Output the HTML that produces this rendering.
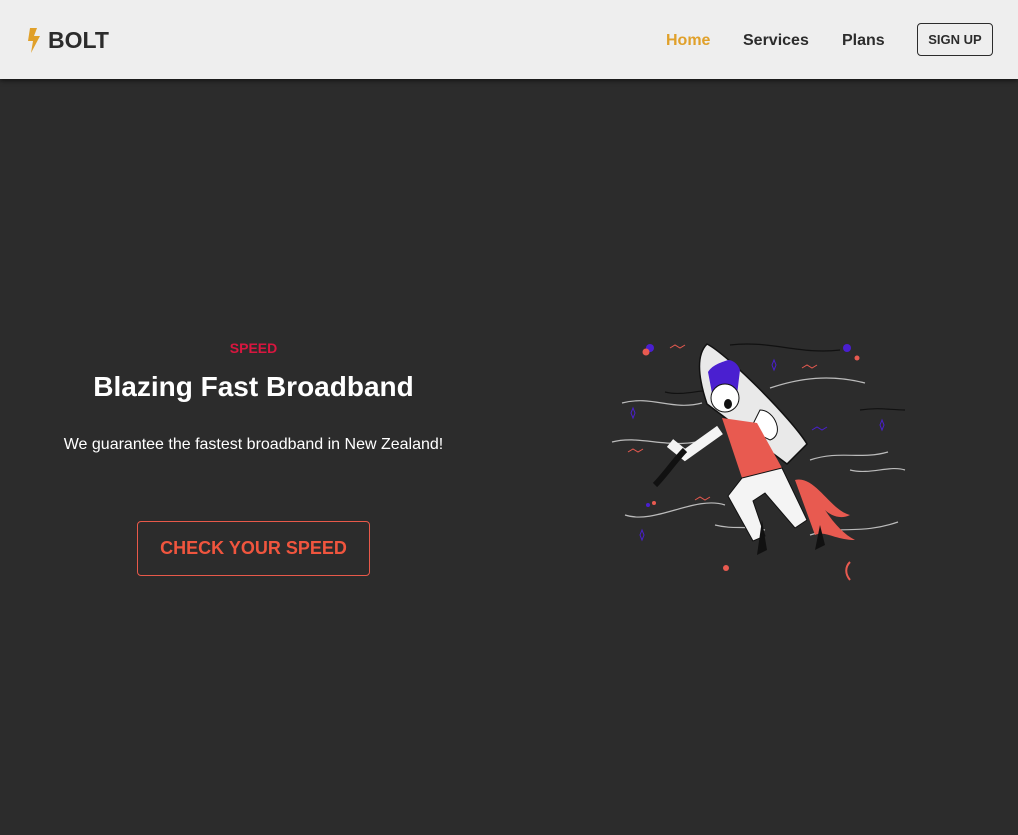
<!DOCTYPE html>
<html><head><meta charset="utf-8"><style>
*{margin:0;padding:0;box-sizing:border-box}
body{width:1018px;height:835px;background:#2c2c2c;font-family:"Liberation Sans",sans-serif;overflow:hidden;position:relative}
header{position:absolute;left:0;top:0;width:1018px;height:79px;background:#eeeeee;box-shadow:0 2px 4px rgba(0,0,0,.5)}
.logo{position:absolute;left:26px;top:27px;font-weight:bold;font-size:23px;color:#2c2c2c;display:flex;align-items:center}
.nav a{position:absolute;top:31px;display:block;line-height:20px;font-size:16px;font-weight:bold;color:#2c2c2c;text-decoration:none}
.btn{position:absolute;left:917px;top:23px;width:76px;height:33px;border:1px solid #2c2c2c;border-radius:4px;font-size:13px;font-weight:bold;color:#2c2c2c;text-align:center;line-height:31px}
.t{position:absolute;left:0;width:507px;text-align:center}
</style></head><body>
<header>
<div class="logo"><svg width="17" height="25" viewBox="0 0 17 25"><path d="M4 0h7l-3 8h6L5 25l2-12H2z" fill="#e0a02a"/></svg><span style="margin-left:5px">BOLT</span></div>
<div class="nav"><a style="left:666px;color:#e0a02a">Home</a><a style="left:743px">Services</a><a style="left:842px">Plans</a></div>
<div class="btn">SIGN UP</div>
</header>
<div class="t" style="top:340px;font-size:14px;font-weight:bold;color:#d9163f">SPEED</div>
<div class="t" style="top:371px;font-size:28px;font-weight:bold;color:#fff">Blazing Fast Broadband</div>
<div class="t" style="top:436px;font-size:16px;color:#fff">We guarantee the fastest broadband in New Zealand!</div>
<div style="position:absolute;left:137px;top:521px;width:233px;height:55px;border:1px solid #e8594a;border-radius:4px;color:#f0553e;font-size:18px;font-weight:bold;text-align:center;line-height:53px">CHECK YOUR SPEED</div>
<svg style="position:absolute;left:600px;top:330px" width="320" height="260" viewBox="0 0 320 260" fill="none">
<g stroke="#bbb" stroke-width="1.2">
<path d="M22 73c30-8 50 8 80 0"/><path d="M12 112c30-8 60 10 100-4"/><path d="M170 58c30-10 60-14 95-5"/><path d="M210 130c30-10 50 0 78-8"/><path d="M250 140c20 5 40-5 55 0"/><path d="M25 185c30 10 70-20 100-10"/><path d="M210 205c30-10 50 0 88-13"/><path d="M115 195c20 5 30 0 50 5"/>
</g>
<g stroke="#111" stroke-width="1.2"><path d="M65 62c20 5 40-5 55 0"/><path d="M130 15c40-5 70 10 110 5"/><path d="M260 80c20-3 30 0 45 0"/></g>
<path d="M107 14c20 10 85 75 100 100l-20 20-80-60c-10-30-10-50 0-60z" fill="#e9e9e9" stroke="#111" stroke-width="1.5"/>
<path d="M160 80c15 0 25 25 10 30l-20-10z" fill="#fff" stroke="#111"/>
<path d="M108 42c5-8 15-10 20-12 5 0 10 4 12 10l-3 25-25-2z" fill="#4a1fd0"/>
<circle cx="125" cy="68" r="14" fill="#fff" stroke="#111"/>
<ellipse cx="128" cy="74" rx="4" ry="5" fill="#111"/>
<path d="M122 88l35 5 25 45-40 10z" fill="#e85a50"/>
<path d="M142 148l40-10 25 52-12 8-30-35-12 8 12 35-12 5-25-45z" fill="#f4f4f4" stroke="#111"/>
<path d="M195 150c20-5 35 30 55 35-10 5-20 0-25-5 10 15 20 25 30 30-20 0-30-10-40-5z" fill="#e85a50"/>
<path d="M120 100l-35 25-15-12" stroke="#f4f4f4" stroke-width="10"/>
<path d="M85 120c-10 10-20 25-30 35" stroke="#111" stroke-width="6"/>
<path d="M162 190l-5 35 10-5z" fill="#111"/><path d="M220 195l-5 25 10-5z" fill="#111"/>
<g stroke="#e85a50" stroke-width="1"><path d="M70 18l5-3 5 3 5-3"/><path d="M202 38l5-3 5 3 5-3"/><path d="M28 122l5-3 5 3 5-3"/><path d="M95 170l5-3 5 3 5-3"/></g>
<g stroke="#4a1fd0" stroke-width="1"><path d="M212 100l5-3 5 3 5-3"/><path d="M174 30l-2 5 2 5 2-5z"/><path d="M33 78l-2 5 2 5 2-5z"/><path d="M282 90l-2 5 2 5 2-5z"/><path d="M42 200l-2 5 2 5 2-5z"/></g>
<circle cx="50" cy="18" r="4" fill="#4a1fd0"/><circle cx="46" cy="22" r="3.5" fill="#e85a50"/><circle cx="247" cy="18" r="4" fill="#4a1fd0"/><circle cx="257" cy="28" r="2.5" fill="#e85a50"/><circle cx="126" cy="238" r="3" fill="#e85a50"/><circle cx="48" cy="175" r="2" fill="#4a1fd0"/><circle cx="54" cy="173" r="2" fill="#e85a50"/><path d="M250 232c-5 5-5 12 0 18" stroke="#e85a50" stroke-width="2"/>
</svg>
</body></html>
